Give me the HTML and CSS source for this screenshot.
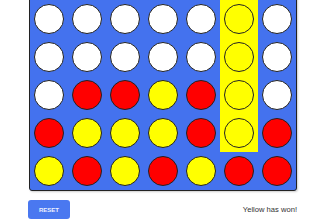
FILE: index.html
```html
<!DOCTYPE html>
<html lang="en">
<head>
    <meta charset="UTF-8">
    <meta name="viewport" content="width=device-width, initial-scale=1.0">
    <title>Connect Four</title>
    <link rel="stylesheet" href="styles.css">
</head>
<body>
    <div class="game">
        <div class="board" id="board"></div>
        <div class="controls">
            <button class="reset-btn" onclick="resetGame()">Reset</button>
            <div class="status" id="status">Yellow has won!</div>
        </div>
    </div>

    <script>
        // 0 = empty, 1 = red, 2 = yellow
        let grid = [
            [0, 0, 0, 0, 0, 0, 0],
            [0, 0, 0, 0, 0, 2, 0],
            [0, 0, 0, 0, 0, 2, 0],
            [0, 1, 1, 2, 1, 2, 0],
            [1, 2, 2, 2, 1, 2, 1],
            [2, 1, 2, 1, 2, 1, 1]
        ];
        let winCells = ['1-5', '2-5', '3-5', '4-5'];

        function render() {
            const board = document.getElementById('board');
            board.innerHTML = '';
            grid.forEach((row, r) => {
                row.forEach((val, c) => {
                    const cell = document.createElement('div');
                    cell.className = 'cell';
                    if (winCells.includes(r + '-' + c)) {
                        cell.classList.add('win');
                    }
                    const disc = document.createElement('div');
                    disc.className = 'disc' + (val === 1 ? ' red' : val === 2 ? ' yellow' : '');
                    cell.appendChild(disc);
                    board.appendChild(cell);
                });
            });
        }

        function resetGame() {
            grid = grid.map(row => row.map(() => 0));
            winCells = [];
            document.getElementById('status').textContent = "Red's turn";
            render();
        }

        render();
    </script>
</body>
</html>
```

FILE: styles.css
```css
body {
    margin: 0;
    font-family: "Liberation Sans", Arial, sans-serif;
    background: white;
}

.game {
    width: 268px;
    margin: -39px 0 0 29px;
}

.board {
    display: grid;
    grid-template-columns: repeat(7, 38px);
    grid-auto-rows: 38px;
    background: #4472ee;
    border: 1px solid #222;
    border-radius: 3px;
    box-shadow: 1px 1px 2px rgba(0,0,0,0.2);
}

.cell {
    display: flex;
    align-items: center;
    justify-content: center;
}

.cell.win {
    background: #ffff00;
}

.disc {
    width: 28px;
    height: 28px;
    border-radius: 50%;
    background: white;
    border: 1.6px solid #222;
}

.disc.red {
    background: #ff0000;
}

.disc.yellow {
    background: #ffff00;
}

.controls {
    display: flex;
    justify-content: space-between;
    align-items: center;
    margin-top: 9px;
}

.reset-btn {
    background: #4a78f0;
    color: #eef2ff;
    border: none;
    border-radius: 3px;
    width: 42px;
    height: 19px;
    padding: 0;
    margin-left: -1px;
    font-family: "Liberation Sans", Arial, sans-serif;
    font-size: 6px;
    font-weight: bold;
    text-transform: uppercase;
    cursor: pointer;
}

.reset-btn:hover {
    background: #3a66d8;
}

.status {
    font-size: 7.6px;
    color: #333;
}
```
